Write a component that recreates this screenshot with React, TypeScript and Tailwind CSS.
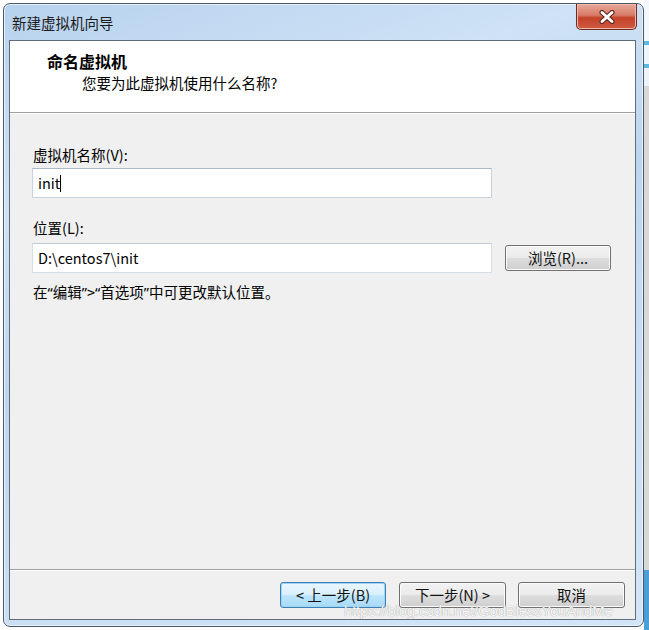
import React from "react";

const font = { fontFamily: '"Noto Sans CJK SC", "Noto Sans", sans-serif' };
const q = { fontFamily: '"Noto Sans", "Liberation Sans", sans-serif' };

function WinButton({ children, focused = false, w }: { children: React.ReactNode; focused?: boolean; w: string }) {
  return (
    <div
      className={
        "h-[26px] rounded-[3px] border flex items-center justify-center text-[14.5px] leading-[14px] text-[#111] " +
        w +
        " " +
        (focused
          ? "border-[#3c7fb1] shadow-[inset_0_0_0_1px_#9fd6f7] bg-[linear-gradient(to_bottom,#eaf6fd_0%,#d9f0fc_50%,#bee6fd_51%,#a7d9f5_100%)]"
          : "border-[#707070] shadow-[inset_0_0_0_1px_#fcfcfc] bg-[linear-gradient(to_bottom,#f2f2f2_0%,#ebebeb_50%,#dddddd_51%,#cfcfcf_100%)]")
      }
    >
      {children}
    </div>
  );
}

export default function App() {
  return (
    <div className="w-[649px] h-[630px] bg-white flex overflow-hidden relative" style={font}>
      {/* dialog window */}
      <div className="ml-[3px] mt-[3px] w-[641px] h-[624px] shrink-0 rounded-[7px] border border-[#4d5966] bg-[linear-gradient(160deg,#b7d2ee_0%,#cfe2f6_25%,#bdd6ef_45%,#c9def4_70%,#d3e6f8_100%)] shadow-[inset_0_0_0_1px_#e6f1fb] flex flex-col">
        {/* title bar */}
        <div className="h-[36px] flex items-start shrink-0">
          <div className="pl-[8px] pt-[9px] text-[14.5px] leading-[20px] text-[#1b1b1b] flex-1">新建虚拟机向导</div>
          <div className="mr-[6px] w-[61px] h-[26px] rounded-b-[5px] border border-t-0 border-[#6e2a20] bg-[linear-gradient(to_bottom,#e8a99c_0%,#d77a66_45%,#c4432b_55%,#cf5a40_100%)] shadow-[inset_0_0_0_1px_#f0b9ab] flex items-center justify-center">
            <svg width="18" height="14" viewBox="0 0 18 14">
              <path d="M4 2.5 L14 11.5 M14 2.5 L4 11.5" stroke="#5a2018" strokeWidth="5" strokeLinecap="round" />
              <path d="M4 2.5 L14 11.5 M14 2.5 L4 11.5" stroke="#ffffff" strokeWidth="3" strokeLinecap="round" />
            </svg>
          </div>
        </div>

        {/* client area */}
        <div className="ml-[5px] w-[627px] h-[580px] shrink-0 border border-[#5f6c79] flex flex-col bg-[#f0f0f0]">
          {/* header */}
          <div className="h-[72px] shrink-0 bg-white border-b border-[#a0a0a0]">
            <div className="pl-[37px] pt-[10px] text-[16px] font-bold leading-[20px] text-black">命名虚拟机</div>
            <div className="pl-[72px] mt-[2px] text-[14.5px] leading-[20px] text-black">您要为此虚拟机使用什么名称?</div>
          </div>

          {/* body */}
          <div className="flex-1 border-t border-white px-[22px]">
            <div className="pt-[31px] pl-[1px] text-[14.5px] leading-[20px] text-black">虚拟机名称(V):</div>
            <div className="mt-[3px] w-[460px] h-[30px] bg-white border border-[#c6d2de] border-t-[#abb8c6] flex items-center pl-[5px] text-[14.5px] text-black">
              <span>init</span>
              <span className="w-px h-[17px] bg-black" />
            </div>

            <div className="mt-[20px] pl-[1px] text-[14.5px] leading-[20px] text-black">位置(L):</div>
            <div className="mt-[5px] flex items-center">
              <div className="w-[460px] h-[30px] bg-white border border-[#d5dde6] border-t-[#c3ccd6] flex items-center pl-[5px] text-[14.5px] text-black">
                D:\centos7\init
              </div>
              <div className="ml-[13px]">
                <WinButton w="w-[106px]">浏览(R)...</WinButton>
              </div>
            </div>

            <div className="mt-[9px] pl-[1px] text-[14.5px] leading-[20px] text-black">
              在<span style={q}>“</span>编辑<span style={q}>”</span>&gt;<span style={q}>“</span>首选项<span style={q}>”</span>中可更改默认位置。
            </div>
          </div>

          {/* footer */}
          <div className="h-[50px] shrink-0 border-t border-[#a0a0a0] shadow-[inset_0_1px_0_#ffffff] flex items-start justify-end pr-[10px] pt-[12px]">
            <WinButton focused w="w-[106px]">&lt; 上一步(B)</WinButton>
            <div className="ml-[13px]">
              <WinButton w="w-[107px]">下一步(N) &gt;</WinButton>
            </div>
            <div className="ml-[12px]">
              <WinButton w="w-[107px]">取消</WinButton>
            </div>
          </div>
        </div>
      </div>

      {/* window behind, on the right */}
      <div className="flex-1 flex flex-col">
        <div className="h-[41px] bg-[#f4f8fc]" />
        <div className="h-[4px] bg-[#5cb7e2]" />
        <div className="h-[19px] bg-[#eef5fb]" />
        <div className="h-[4px] bg-[#5cb7e2]" />
        <div className="h-[18px] bg-[#eef3f8]" />
        <div className="flex-1 bg-[#d8d8d8]" />
        <div className="h-[60px] bg-[#4aa0d6]" />
      </div>

      {/* watermark */}
      <div
        className="absolute left-[344px] top-[603px] text-[15px] leading-[15px] text-[#f7f7f7] tracking-[-0.2px]"
        style={{ fontFamily: '"Liberation Sans", Arial, sans-serif', textShadow: "0 0 1px #8a8a8a" }}
      >
        https://blog.csdn.net/GodBlessYouAndMe
      </div>
    </div>
  );
}
